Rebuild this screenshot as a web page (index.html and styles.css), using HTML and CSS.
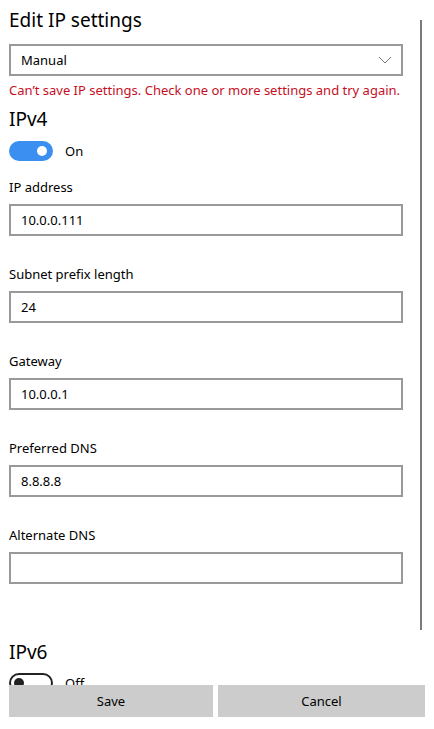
FILE: index.html
```html
<!DOCTYPE html>
<html>
<head>
    <title>Edit IP settings</title>
    <link rel="stylesheet" href="styles.css">
</head>
<body>
    <div class="page">
        <h1 class="title">Edit IP settings</h1>
        <div class="select">
            <span>Manual</span>
            <svg class="chevron" width="14" height="8" viewBox="0 0 14 8"><path d="M1 1 L7 7 L13 1" fill="none" stroke="#777" stroke-width="1"/></svg>
        </div>
        <div class="error">Can’t save IP settings. Check one or more settings and try again.</div>

        <h2 class="section">IPv4</h2>
        <div class="toggle-row">
            <div class="toggle on"><div class="knob"></div></div>
            <span>On</span>
        </div>

        <div class="field">
            <div class="label">IP address</div>
            <div class="input">10.0.0.111</div>
        </div>
        <div class="field">
            <div class="label">Subnet prefix length</div>
            <div class="input">24</div>
        </div>
        <div class="field">
            <div class="label">Gateway</div>
            <div class="input">10.0.0.1</div>
        </div>
        <div class="field">
            <div class="label">Preferred DNS</div>
            <div class="input">8.8.8.8</div>
        </div>
        <div class="field">
            <div class="label">Alternate DNS</div>
            <div class="input"></div>
        </div>

        <h2 class="section v6">IPv6</h2>
        <div class="toggle-row off-row">
            <div class="toggle off"><div class="knob"></div></div>
            <span>Off</span>
        </div>
    </div>

    <div class="scrollbar"></div>

    <div class="buttons">
        <button>Save</button>
        <button>Cancel</button>
    </div>
</body>
</html>
```

FILE: styles.css
```css
body {
    margin: 0;
    background: #fff;
    font-family: "Noto Sans", sans-serif;
    color: #000;
    overflow: hidden;
}

.page {
    padding: 0 9px;
    width: 394px;
}

.title {
    margin: 6px 0 0 0;
    font-size: 19px;
    line-height: 28px;
    font-weight: normal;
}

.select {
    margin-top: 10px;
    height: 28px;
    border: 2px solid #999;
    display: flex;
    align-items: center;
    justify-content: space-between;
    padding: 0 9px 0 10px;
    font-size: 13px;
}

.chevron {
    display: block;
}

.error {
    margin-top: 4px;
    font-size: 13px;
    line-height: 20px;
    color: #c50f1f;
    white-space: nowrap;
}

.section {
    margin: 5px 0 0 0;
    font-size: 19px;
    line-height: 28px;
    font-weight: normal;
}

.section.v6 {
    margin-top: 54px;
}

.toggle-row {
    margin-top: 8px;
    display: flex;
    align-items: center;
    gap: 12px;
    font-size: 13px;
    height: 20px;
}

.off-row {
    margin-top: 7px;
}

.toggle {
    width: 44px;
    height: 20px;
    border-radius: 10px;
    box-sizing: border-box;
    position: relative;
}

.toggle.on {
    background: #3b8ff0;
}

.toggle.off {
    border: 2px solid #222;
}

.knob {
    position: absolute;
    width: 10px;
    height: 10px;
    border-radius: 50%;
    top: 5px;
}

.toggle.on .knob {
    background: #fff;
    right: 6px;
}

.toggle.off .knob {
    background: #222;
    left: 3px;
    top: 3px;
}

.field {
    margin-top: 16px;
}

.field + .field {
    margin-top: 28px;
}

.label {
    font-size: 13px;
    line-height: 20px;
}

.input {
    margin-top: 7px;
    height: 28px;
    border: 2px solid #999;
    padding: 0 10px;
    font-size: 13px;
    line-height: 28px;
}

.scrollbar {
    position: absolute;
    left: 420px;
    top: 20px;
    width: 2px;
    height: 610px;
    background: #7a7a7a;
}

.buttons {
    position: fixed;
    left: 9px;
    bottom: 12px;
    display: grid;
    grid-template-columns: 204px 207px;
    gap: 5px;
}

.buttons button {
    height: 32px;
    border: none;
    background: #ccc;
    font-family: "Noto Sans", sans-serif;
    font-size: 13px;
    color: #000;
    padding: 0;
}
```
